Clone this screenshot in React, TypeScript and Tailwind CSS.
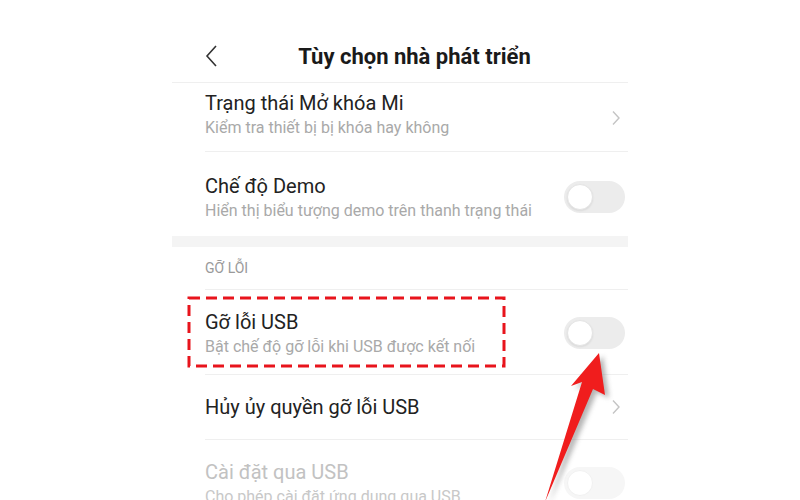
import React from 'react';

const Chevron = () => (
  <svg width="10" height="16" viewBox="0 0 10 16" className="shrink-0">
    <path d="M2 1.5 L8 8 L2 14.5" fill="none" stroke="#c4c4c4" strokeWidth="1.4" />
  </svg>
);

const Toggle = ({ faded = false }: { faded?: boolean }) => (
  <div
    className={`flex items-center shrink-0 w-[61px] h-[32px] rounded-full px-[3px] ${
      faded ? 'bg-[#f6f6f6]' : 'bg-[#ececec]'
    }`}
  >
    <div
      className={`w-[26px] h-[26px] rounded-full bg-white ${
        faded ? 'border border-[#f1f1f1]' : 'border border-[#e4e4e4] shadow-[0_1px_2px_rgba(0,0,0,0.08)]'
      }`}
    />
  </div>
);

type RowProps = {
  title: string;
  subtitle?: string;
  right: React.ReactNode;
  disabled?: boolean;
  className?: string;
};

const Row = ({ title, subtitle, right, disabled, className = '' }: RowProps) => (
  <div className={`flex items-center pl-[33px] pr-[3px] ${className}`}>
    <div className="flex-1 min-w-0">
      <div className={`text-[20px] leading-[26px] ${disabled ? 'text-[#c2c2c2]' : 'text-[#222]'}`}>{title}</div>
      {subtitle && (
        <div className={`text-[16px] leading-[22px] mt-[1px] whitespace-nowrap ${disabled ? 'text-[#c8c8c8]' : 'text-[#a9a9a9]'}`}>
          {subtitle}
        </div>
      )}
    </div>
    {right}
  </div>
);

const Divider = () => <div className="ml-[33px] h-px bg-[#efefef]" />;

export default function App() {
  return (
    <div className="relative w-full h-[500px] overflow-hidden bg-white font-['Roboto','Noto_Sans',sans-serif]">
      <div className="w-[456px] mx-auto">
        {/* header */}
        <div className="flex items-center h-[83px] pt-[32px] pb-[2px] border-b border-[#efefef]">
          <svg width="14" height="24" viewBox="0 0 14 24" className="ml-[32px] shrink-0">
            <path d="M12 2 L3 12 L12 22" fill="none" stroke="#333" strokeWidth="1.6" />
          </svg>
          <div className="flex-1 text-center pr-[17px] text-[22px] font-bold text-[#1a1a1a]">
            Tùy chọn nhà phát triển
          </div>
        </div>

        <Row
          title="Trạng thái Mở khóa Mi"
          subtitle="Kiểm tra thiết bị bị khóa hay không"
          right={<div className="pr-[4px] pt-[8px]"><Chevron /></div>}
          className="h-[68px] pb-[6px]"
        />
        <Divider />
        <Row
          title="Chế độ Demo"
          subtitle="Hiển thị biểu tượng demo trên thanh trạng thái"
          right={<Toggle />}
          className="h-[84px] pt-[6px]"
        />

        <div className="h-[11px] bg-[#f4f4f4]" />

        <div className="h-[42px] flex items-center pl-[33px] text-[14px] text-[#9a9a9a]">GỠ LỖI</div>
        <Divider />

        <div className="relative">
          <Row
            title="Gỡ lỗi USB"
            subtitle="Bật chế độ gỡ lỗi khi USB được kết nối"
            right={<Toggle />}
            className="h-[84px] pt-[2px]"
          />
          {/* annotation box */}
          <svg className="absolute left-[15px] top-[6px]" width="320" height="72" viewBox="0 0 320 72">
            <rect
              x="2"
              y="2"
              width="315"
              height="68"
              fill="none"
              stroke="#e8141c"
              strokeWidth="3"
              strokeDasharray="11 6"
            />
          </svg>
        </div>
        <Divider />
        <Row
          title="Hủy ủy quyền gỡ lỗi USB"
          right={<div className="pr-[4px]"><Chevron /></div>}
          className="h-[64px]"
        />
        <Divider />
        <Row
          title="Cài đặt qua USB"
          subtitle="Cho phép cài đặt ứng dụng qua USB"
          right={<Toggle faded />}
          disabled
          className="h-[84px] pt-[2px]"
        />
      </div>

      {/* red arrow */}
      <svg className="absolute left-0 top-0 pointer-events-none" width="800" height="500" viewBox="0 0 800 500">
        <defs>
          <filter id="blur" x="-20%" y="-20%" width="140%" height="140%">
            <feGaussianBlur stdDeviation="2.5" />
          </filter>
        </defs>
        <polygon
          points="603,356 575,389 586,385 549,505 597,392 609,398"
          fill="#777"
          opacity="0.55"
          filter="url(#blur)"
        />
        <polygon points="599,353 571,386 582,382 545,502 593,389 605,395" fill="#f01d1d" />
      </svg>
    </div>
  );
}
